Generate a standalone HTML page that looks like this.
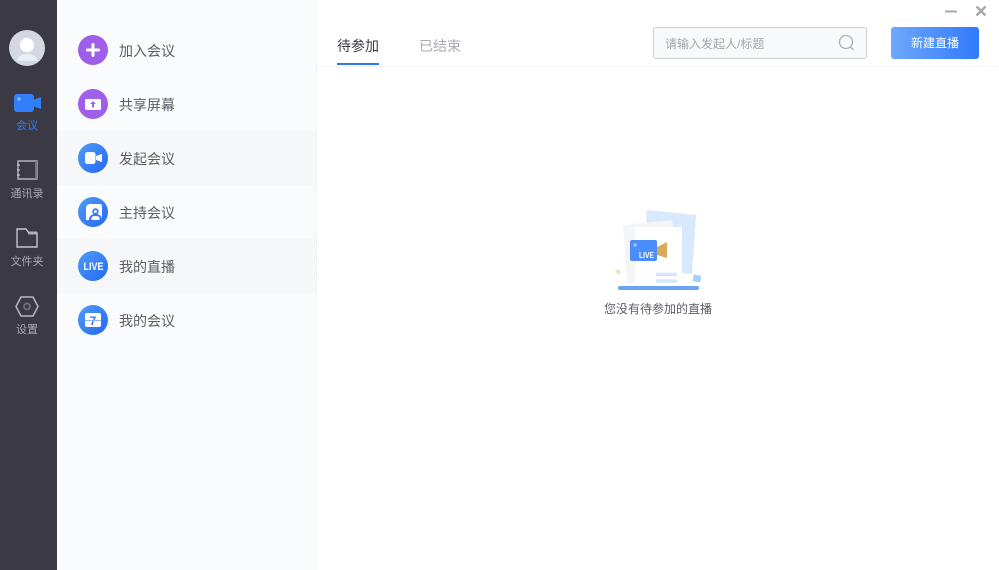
<!DOCTYPE html>
<html lang="zh"><head><meta charset="utf-8"><title>我的直播</title>
<style>
*{box-sizing:border-box;margin:0;padding:0}
html,body{width:999px;height:570px;overflow:hidden;background:#fff;font-family:"Liberation Sans","Noto Sans CJK SC",sans-serif}
.a{position:absolute}
.nl{position:absolute;left:0;width:54px;text-align:center;font-size:11px;color:#a9a9b2;line-height:14px;white-space:nowrap}
.row{position:absolute;left:57px;width:259px;height:54px;background:#f6f7f8}
.c{position:absolute;left:78px;width:30px;height:30px;border-radius:50%;background:linear-gradient(135deg,#4f9df9,#2467f0)}
.p{background:#9f5fe8}
.c svg{position:absolute;left:0;top:0}
.l{position:absolute;left:119px;font-size:14px;line-height:16px;color:#5c5c66;white-space:nowrap}
</style></head><body>
<div class="a" style="left:0;top:0;width:57px;height:570px;background:#3a3944"></div>
<svg class="a" style="left:0;top:0" width="57" height="345" viewBox="0 0 57 345">
<defs><clipPath id="av"><circle cx="27" cy="48" r="18"/></clipPath></defs>
<circle cx="27" cy="48" r="18" fill="#d5d8e2"/>
<g clip-path="url(#av)"><path d="M17 61c1-5 5-7 10-7s9 2 11 7z" fill="#e9eef6"/><circle cx="27" cy="45" r="7" fill="#fff"/></g>
<rect x="14" y="94" width="20" height="18" rx="3" fill="#317ffb"/><path d="M33 100l8-3v12l-8-3z" fill="#317ffb"/><circle cx="19" cy="99" r="1.600" fill="#9cc3fd"/>
<path d="M18 161h19v18H18z" fill="none" stroke="#b4b4bc" stroke-width="1.400"/><path d="M36 161v18" stroke="#77777f" stroke-width="2"/><path d="M17 165h3M17 170h3M17 175h3" stroke="#d8d8de"/>
<path d="M28 231h9v4H28z" fill="#77777f"/>
<path d="M17 229h9l3 4h8v14H17z" fill="none" stroke="#c4c4ca" stroke-width="1.400"/>
<path d="M21 297h12l5 9.500-5 9.500H21l-5-9.500z" fill="none" stroke="#b8b8c0" stroke-width="1.500"/><circle cx="27" cy="306.500" r="3" fill="none" stroke="#70707a" stroke-width="1.800"/>
</svg>
<div class="nl" style="top:119px;color:#317ffb">会议</div>
<div class="nl" style="top:187px">通讯录</div>
<div class="nl" style="top:255px">文件夹</div>
<div class="nl" style="top:323px">设置</div>

<div class="a" style="left:57px;top:0;width:260px;height:570px;background:#fafbfd;border-right:1px solid #f3f4f6"></div>
<div class="row" style="top:131px"></div>
<div class="row" style="top:239px"></div>
<div class="a" style="left:316px;top:240px;width:1px;height:3px;background:#dbe9fb"></div>
<div class="a" style="left:316px;top:256px;width:1px;height:3px;background:#dbe9fb"></div>
<div class="a" style="left:316px;top:272px;width:1px;height:3px;background:#dbe9fb"></div>

<div class="c p" style="top:35px"><svg width="30" height="30"><path d="M15 9.500v11M9.500 15h11" stroke="#fff" stroke-width="3" stroke-linecap="round"/></svg></div>
<div class="l" style="top:43px">加入会议</div>
<div class="c p" style="top:89px"><svg width="30" height="30"><rect x="7" y="10" width="16" height="11" rx="1.500" fill="#fff"/><path d="M15 12l3 3h-2v3.500h-2V15h-2z" fill="#9f5fe8"/></svg></div>
<div class="l" style="top:97px">共享屏幕</div>
<div class="c" style="top:143px"><svg width="30" height="30"><rect x="7" y="9" width="10.500" height="12" rx="2.500" fill="#fff"/><path d="M18 13l6-2v8l-6-2z" fill="#fff"/></svg></div>
<div class="l" style="top:151px">发起会议</div>
<div class="c" style="top:197px"><svg width="30" height="30"><path d="M12 7h10a2 2 0 0 1 2 2v14H8V11a4 4 0 0 1 4-4z" fill="#fff"/><circle cx="17.500" cy="14.500" r="3.200" fill="#3278f3"/><path d="M11 23c0-4 2.500-6 6.500-6s6.500 2 6.500 6z" fill="#3278f3"/><circle cx="17.500" cy="14.500" r="1.500" fill="#fff"/><path d="M13.500 23v-2.500c.5-1 2-1.500 4-1.500s3.500.5 4 1.500V23z" fill="#fff"/></svg></div>
<div class="l" style="top:205px">主持会议</div>
<div class="c" style="top:251px"><svg width="30" height="30"><text x="5.500" y="19" textLength="20" lengthAdjust="spacingAndGlyphs" font-family="Liberation Sans" font-weight="700" font-size="11" fill="#fff">LIVE</text></svg></div>
<div class="l" style="top:259px">我的直播</div>
<div class="c" style="top:305px"><svg width="30" height="30"><rect x="7" y="8" width="16" height="14" rx="2" fill="#fff"/><text x="15" y="20" text-anchor="middle" font-family="Liberation Sans" font-weight="700" font-size="12" fill="#3278f3">7</text><path d="M7 15.500h16" stroke="#8fb6f6" stroke-width="1"/></svg></div>
<div class="l" style="top:313px">我的会议</div>

<svg class="a" style="left:940px;top:3px" width="50" height="16"><path d="M5 8.500h12" stroke="#a8a8a8" stroke-width="2"/><path d="M36.500 3.500l9 9M45.500 3.500l-9 9" stroke="#a8a8a8" stroke-width="2.400"/></svg>

<div class="a" style="left:337px;top:38px;font-size:14px;line-height:16px;color:#3a3a44;white-space:nowrap">待参加</div>
<div class="a" style="left:419px;top:38px;font-size:14px;line-height:16px;color:#aaaab2;white-space:nowrap">已结束</div>
<div class="a" style="left:337px;top:63px;width:42px;height:2px;background:#2e74f5"></div>
<div class="a" style="left:317px;top:66px;width:682px;height:1px;background:#f3f4f6"></div>

<div class="a" style="left:653px;top:27px;width:214px;height:32px;border:1px solid #cfcfd4;border-radius:3px;background:#f8f9fb"></div>
<div class="a" style="left:665px;top:36px;font-size:12px;line-height:16px;color:#a5a5ad;white-space:nowrap">请输入发起人/标题</div>
<svg class="a" style="left:837px;top:33px" width="20" height="20"><circle cx="9" cy="9" r="6.500" fill="none" stroke="#b0b0b6" stroke-width="1.300"/><path d="M13.500 14l3 3" stroke="#b0b0b6" stroke-width="1.500"/></svg>

<div class="a" style="left:891px;top:27px;width:88px;height:32px;border-radius:3px;background:linear-gradient(90deg,#6ea8fb,#3279fb);color:#fff;font-size:12px;line-height:32px;text-align:center">新建直播</div>

<svg class="a" style="left:610px;top:205px" width="96" height="90" viewBox="610 205 96 90">
<path d="M647 210l49 5-4 59-49-4z" fill="#d9e9fd"/>
<path d="M623 225l49-5 10 63h-55z" fill="#f4f5f7"/>
<rect x="635" y="227" width="47" height="57" fill="#fff"/>
<path d="M657 247l10-5v16l-10-3z" fill="#d9a85c"/>
<rect x="630" y="240" width="27" height="21" rx="2" fill="#4b8dfa"/>
<circle cx="635" cy="245" r="1.700" fill="#a5c8fd"/>
<text x="639" y="258" textLength="15" lengthAdjust="spacingAndGlyphs" font-family="Liberation Sans" font-weight="700" font-size="8" fill="#fff">LIVE</text>
<path d="M656 274.500h21M656 281h21" stroke="#d5e5fa" stroke-width="3.500"/>
<rect x="693" y="275" width="8" height="7" rx="1" fill="#a8d0f8" transform="rotate(8 697 278)"/>
<path d="M615 269l6 2-3 4z" fill="#f0dcb8"/>
<rect x="618" y="286" width="81" height="4" rx="2" fill="#6ba3f5"/>
</svg>
<div class="a" style="left:604px;top:301px;font-size:12px;line-height:16px;color:#5c5c66;white-space:nowrap">您没有待参加的直播</div>
</body></html>
